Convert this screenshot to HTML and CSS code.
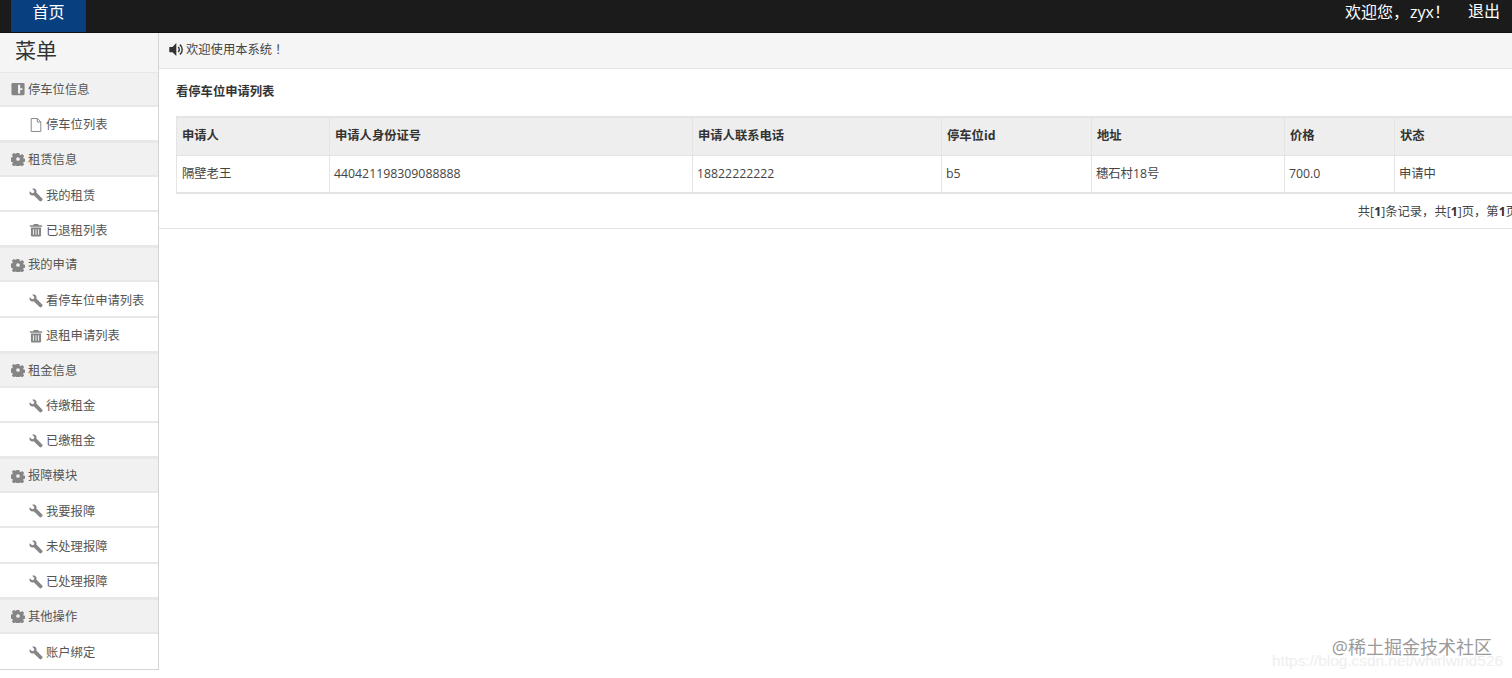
FILE: index.html
```html
<!DOCTYPE html>
<html lang="zh">
<head>
<meta charset="utf-8">
<title>看停车位申请列表</title>
<link rel="stylesheet" href="styles.css">
</head>
<body>
<svg class="sprite" width="0" height="0" aria-hidden="true">
  <defs>
    <symbol id="i-gear" viewBox="0 0 16 16"><path fill-rule="evenodd" d="M6.400 1h3.200l.4 2 1.100.5 1.800-1.100 2.100 2.100-1.100 1.800.5 1.100 2 .4v3.200l-2 .4-.5 1.100 1.100 1.800-2.100 2.100-1.800-1.100-1.100.5-.4 2H6.400l-.4-2-1.100-.5-1.800 1.100-2.100-2.100 1.100-1.800-.5-1.100-2-.4V6.400l2-.4.5-1.100-1.100-1.800 2.100-2.100 1.800 1.100 1.100-.5zM8 5.900a2.100 2.100 0 1 0 0 4.200 2.100 2.100 0 0 0 0-4.200z"/></symbol>
    <symbol id="i-wrench" viewBox="0 0 16 16"><path d="M1 3.600 3.400 6 5.600 5.500 6.100 3.300 3.700.9C5.600.1 7.700.9 8.400 2.700c.3.900.3 1.800 0 2.500l6.700 6.700c.6.600.6 1.500 0 2.100l-.9.900c-.6.600-1.500.6-2.100 0L5.400 8.200C3.300 9 1.100 7.900.6 5.900.4 5.100.6 4.300 1 3.600z"/></symbol>
    <symbol id="i-trash" viewBox="0 0 16 16"><path fill-rule="evenodd" d="M5.500 1h5l.7 1.500H15v1.800H1V2.500h3.800zM2.200 5.200h11.600v8.800c0 .8-.7 1.500-1.500 1.500H3.700c-.8 0-1.500-.7-1.500-1.500zm2.300 1.800v6.500h1V7zm3 0v6.500h1V7zm3 0v6.500h1V7z"/></symbol>
    <symbol id="i-file" viewBox="0 0 16 16"><path fill="none" stroke="currentColor" stroke-width="1.100" d="M2.500.6h7.200l3.800 3.800v11H2.500zM9.500.8v3.800h3.800"/></symbol>
    <symbol id="i-plus" viewBox="0 0 16 16"><path fill-rule="evenodd" d="M2 1h12a1.500 1.500 0 0 1 1.500 1.500v11A1.500 1.500 0 0 1 14 15H2a1.500 1.500 0 0 1-1.500-1.500v-11A1.500 1.500 0 0 1 2 1zm6 2v10h2.500V9H13V7h-2.500V3z"/></symbol>
    <symbol id="i-volume" viewBox="0 0 16 16"><path d="M7.800 1v14L3.700 10.800H.3V5.200h3.400z"/><path fill="none" stroke="currentColor" stroke-width="1.500" d="M9.800 5.400a3.400 3.400 0 0 1 0 5.200M11.600 2.800a6.600 6.600 0 0 1 0 10.400"/></symbol>
  </defs>
</svg>

<header class="topbar">
  <a class="home" href="#">首页</a>
  <div class="user">
    <span class="welcome">欢迎您，<span class="name">zyx</span><span class="bang">！</span></span>
    <a class="logout" href="#">退出</a>
  </div>
</header>

<div class="body">
  <aside class="sidebar">
    <h2 class="menu-title">菜单</h2>
    <ul class="menu">
      <li class="group"><svg class="ico"><use href="#i-plus"/></svg>停车位信息</li>
      <li class="item"><svg class="ico"><use href="#i-file"/></svg>停车位列表</li>
      <li class="group"><svg class="ico"><use href="#i-gear"/></svg>租赁信息</li>
      <li class="item"><svg class="ico"><use href="#i-wrench"/></svg>我的租赁</li>
      <li class="item"><svg class="ico"><use href="#i-trash"/></svg>已退租列表</li>
      <li class="group"><svg class="ico"><use href="#i-gear"/></svg>我的申请</li>
      <li class="item"><svg class="ico"><use href="#i-wrench"/></svg>看停车位申请列表</li>
      <li class="item"><svg class="ico"><use href="#i-trash"/></svg>退租申请列表</li>
      <li class="group"><svg class="ico"><use href="#i-gear"/></svg>租金信息</li>
      <li class="item"><svg class="ico"><use href="#i-wrench"/></svg>待缴租金</li>
      <li class="item"><svg class="ico"><use href="#i-wrench"/></svg>已缴租金</li>
      <li class="group"><svg class="ico"><use href="#i-gear"/></svg>报障模块</li>
      <li class="item"><svg class="ico"><use href="#i-wrench"/></svg>我要报障</li>
      <li class="item"><svg class="ico"><use href="#i-wrench"/></svg>未处理报障</li>
      <li class="item"><svg class="ico"><use href="#i-wrench"/></svg>已处理报障</li>
      <li class="group"><svg class="ico"><use href="#i-gear"/></svg>其他操作</li>
      <li class="item"><svg class="ico"><use href="#i-wrench"/></svg>账户绑定</li>
    </ul>
  </aside>

  <main class="content">
    <div class="notice"><svg class="ico-vol"><use href="#i-volume"/></svg>欢迎使用本系统<span class="bang">！</span></div>
    <section class="panel">
      <h3 class="panel-title">看停车位申请列表</h3>
      <table class="grid">
        <colgroup>
          <col class="c1"><col class="c2"><col class="c3"><col class="c4"><col class="c5"><col class="c6"><col class="c7">
        </colgroup>
        <thead>
          <tr><th>申请人</th><th>申请人身份证号</th><th>申请人联系电话</th><th>停车位id</th><th>地址</th><th>价格</th><th>状态</th></tr>
        </thead>
        <tbody>
          <tr><td>隔壁老王</td><td>440421198309088888</td><td>18822222222</td><td>b5</td><td>穗石村18号</td><td>700.0</td><td>申请中</td></tr>
        </tbody>
      </table>
      <p class="pager">共[<b>1</b>]条记录，共[<b>1</b>]页，第<b>1</b>页</p>
    </section>
  </main>
</div>

<div class="watermark">
  <span class="wm-main">@稀土掘金技术社区</span>
  <span class="wm-sub">https://blog.csdn.net/whirlwind526</span>
</div>
</body>
</html>
```
FILE: styles.css
```css
* { box-sizing: border-box; }
html, body { height: 100%; }
body {
  margin: 0;
  overflow: hidden;
  background: #fff;
  color: #444;
  font: 12.3px/1.4 "Open Sans", "Noto Sans CJK SC", sans-serif;
  display: flex;
  flex-direction: column;
  position: relative;
}
.sprite { position: absolute; }
a { color: inherit; text-decoration: none; }
.bang { font-family: "Noto Sans CJK JP", sans-serif; }

.topbar {
  flex: none;
  height: 33px;
  background: #1b1b1b;
  border-bottom: 1px solid #111;
  display: flex;
  justify-content: space-between;
  color: #fff;
  font-size: 16px;
}
.home {
  margin-left: 11px;
  width: 75px;
  height: 32px;
  line-height: 24px;
  text-align: center;
  background: #073f7f;
}
.user { display: flex; line-height: 23px; padding-right: 12px; }
.welcome { margin-right: 18px; }
.name { margin-left: 1px; }

.body { flex: 1; display: flex; min-height: 0; }

.sidebar {
  flex: none;
  width: 159px;
  height: 637px;
  border-right: 1px solid #d5d5d5;
  border-bottom: 1px solid #d5d5d5;
  display: flex;
  flex-direction: column;
}
.menu-title {
  margin: 0;
  height: 39px;
  padding-left: 15px;
  font-size: 21px;
  font-weight: 400;
  line-height: 34px;
  color: #333;
  background: #f5f5f5;
}
.menu {
  list-style: none;
  margin: 0;
  padding: 0;
  display: grid;
  grid-auto-rows: 35.15px;
}
.group, .item {
  display: flex;
  align-items: center;
  color: #555;
  padding-top: 3px;
  border-bottom: 2px solid #e8e8e8;
}
.group {
  padding-top: 1px;
  padding-left: 11px;
  background: #f1f1f1;
  border-top: 1px solid #e8e8e8;
}
.item { padding-left: 29px; background: #fff; }
.item:last-child { border-bottom: 0; }
.ico {
  width: 14px;
  height: 14px;
  margin-right: 3px;
  fill: #858585;
  color: #858585;
  flex: none;
}

.content { flex: 1; min-width: 0; overflow: hidden; }
.notice {
  height: 36px;
  padding: 0 0 2px 10px;
  display: flex;
  align-items: center;
  background: #f5f5f5;
  border-bottom: 1px solid #e5e5e5;
  color: #444;
}
.ico-vol {
  width: 15px;
  height: 15px;
  margin-right: 2px;
  fill: #333;
  color: #333;
  flex: none;
}
.panel {
  height: 160px;
  padding-left: 17px;
  border-bottom: 1px solid #e5e5e5;
}
.panel-title {
  margin: 0;
  height: 47px;
  padding-top: 14px;
  font-size: 12.3px;
  line-height: 17px;
  font-weight: 700;
  color: #333;
}
.grid {
  table-layout: fixed;
  border-collapse: collapse;
  width: 1360px;
  border: 2px solid #e4e4e4;
  border-width: 2px 1px;
}
.c1 { width: 153px; }
.c2 { width: 363px; }
.c3 { width: 249px; }
.c4 { width: 150px; }
.c5 { width: 193px; }
.c6 { width: 110px; }
.c7 { width: 142px; }
.grid th, .grid td {
  padding: 0 5px;
  text-align: left;
  border: 1px solid #e4e4e4;
  color: #444;
}
.grid td { padding-left: 4px; }
.grid tr > :first-child { padding-left: 5px; }
.grid th {
  height: 38px;
  padding-bottom: 2px;
  background: #eee;
  color: #333;
  font-weight: 700;
}
.grid td { height: 38px; }
.pager {
  width: 1342px;
  margin: 9px 0 0;
  text-align: right;
  line-height: 17px;
  color: #444;
  white-space: nowrap;
}
.pager b { color: #333; }

.watermark {
  position: absolute;
  right: 9px;
  top: 636px;
  display: flex;
  flex-direction: column;
  align-items: flex-end;
  pointer-events: none;
}
.wm-main {
  margin-right: 11px;
  font-size: 18px;
  line-height: 22px;
  color: #9a9a9a;
}
.wm-sub {
  margin-top: -5px;
  font-family: "Liberation Sans", sans-serif;
  font-size: 15.4px;
  line-height: 16px;
  color: #eeeeee;
}
```
